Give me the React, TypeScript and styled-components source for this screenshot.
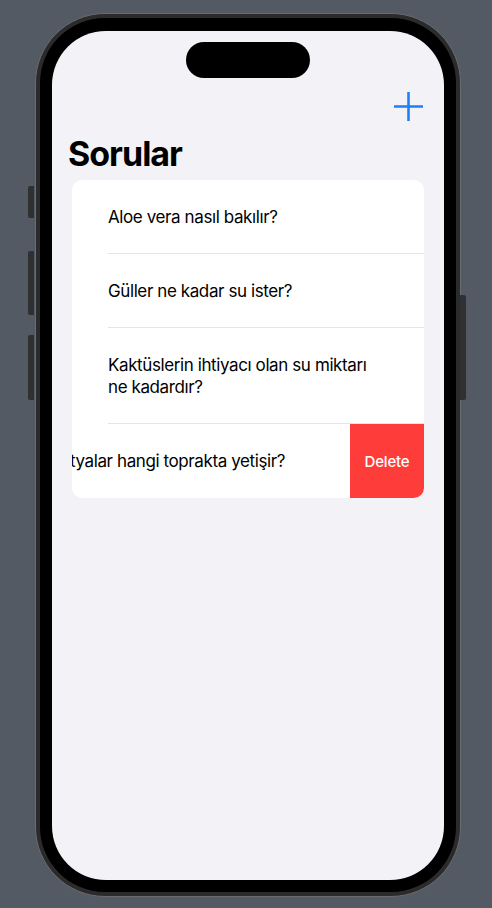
import React from "react";
import styled, { createGlobalStyle } from "styled-components";

const Global = createGlobalStyle`
  html, body { margin: 0; padding: 0; }
  body {
    background: #545a63;
    font-family: Inter, "Noto Sans", "Liberation Sans", sans-serif;
    -webkit-font-smoothing: antialiased;
  }
`;

const Stage = styled.div`
  width: 492px;
  height: 908px;
  padding: 13px 0 0 35px;
  box-sizing: border-box;
  overflow: hidden;
`;

const Frame = styled.div`
  position: relative;
  width: 426px;
  height: 884px;
  box-sizing: border-box;
  border-radius: 70px;
  background: #2b2b2c;
  border: 1px solid #6a6c70;
  padding: 4px;
`;

const SideButton = styled.div<{ $side: "left" | "right"; $top: number; $h: number }>`
  position: absolute;
  top: ${(p) => p.$top}px;
  height: ${(p) => p.$h}px;
  width: 6px;
  ${(p) => (p.$side === "left" ? "left: -8px;" : "right: -6px;")}
  background: #2f3032;
  border-radius: ${(p) => (p.$side === "left" ? "2px 0 0 2px" : "0 2px 2px 0")};
`;

const Bezel = styled.div`
  width: 100%;
  height: 100%;
  box-sizing: border-box;
  border-radius: 65px;
  background: #000;
  padding: 13px 12px 12px;
`;

const Screen = styled.div`
  width: 392px;
  height: 849px;
  border-radius: 54px;
  background: #f2f2f7;
  overflow: hidden;
  display: flex;
  flex-direction: column;
`;

const Island = styled.div`
  width: 124px;
  height: 36px;
  border-radius: 18px;
  background: #000;
  margin: 11px auto 0;
  flex: none;
`;

const NavBar = styled.div`
  display: flex;
  justify-content: flex-end;
  padding: 14px 21px 0 0;
`;

const AddButton = styled.button`
  width: 29px;
  height: 29px;
  padding: 0;
  border: none;
  background: none;
  display: flex;
  cursor: pointer;
`;

const Title = styled.h1`
  margin: 12px 0 0 16px;
  font-size: 34px;
  line-height: 41px;
  font-weight: 700;
  color: #000;
  letter-spacing: -1px;
`;

const Card = styled.div`
  margin: 6px 20px 0;
  background: #fff;
  border-radius: 10px;
  overflow: hidden;
`;

const Row = styled.div<{ $divider: boolean }>`
  position: relative;
  display: flex;
  overflow: hidden;
  &::after {
    content: "";
    display: ${(p) => (p.$divider ? "block" : "none")};
    position: absolute;
    left: 36px;
    right: 0;
    bottom: 0;
    height: 1px;
    background: #e4e4e9;
  }
`;

const RowContent = styled.div<{ $swiped: boolean }>`
  flex: 0 0 100%;
  box-sizing: border-box;
  padding: 26px 44px 26px ${(p) => (p.$swiped ? "39px" : "36px")};
  margin-left: ${(p) => (p.$swiped ? "-74px" : "0")};
  font-size: 17px;
  line-height: 22px;
  letter-spacing: -0.4px;
  color: #000;
  white-space: ${(p) => (p.$swiped ? "nowrap" : "normal")};
`;

const DeleteAction = styled.button`
  flex: 0 0 74px;
  border: none;
  background: #fe3d3a;
  color: #fff;
  font-family: inherit;
  font-size: 15px;
  font-weight: 500;
  letter-spacing: -0.2px;
  padding: 0;
`;

const questions = [
  "Aloe vera nasıl bakılır?",
  "Güller ne kadar su ister?",
  "Kaktüslerin ihtiyacı olan su miktarı ne kadardır?",
  "Kalatyalar hangi toprakta yetişir?",
];

export default function App() {
  const swipedIndex = 3;
  return (
    <>
      <Global />
      <Stage>
        <Frame>
          <SideButton $side="left" $top={172} $h={32} />
          <SideButton $side="left" $top={237} $h={64} />
          <SideButton $side="left" $top={321} $h={65} />
          <SideButton $side="right" $top={281} $h={105} />
          <Bezel>
            <Screen>
              <Island />
              <NavBar>
                <AddButton aria-label="Ekle">
                  <svg width="29" height="29" viewBox="0 0 29 29">
                    <path d="M14.5 0v29M0 14.5h29" stroke="#1e80f8" strokeWidth="2.6" fill="none" />
                  </svg>
                </AddButton>
              </NavBar>
              <Title>Sorular</Title>
              <Card>
                {questions.map((q, i) => (
                  <Row key={q} $divider={i < questions.length - 1}>
                    <RowContent $swiped={i === swipedIndex}>{q}</RowContent>
                    {i === swipedIndex && <DeleteAction>Delete</DeleteAction>}
                  </Row>
                ))}
              </Card>
            </Screen>
          </Bezel>
        </Frame>
      </Stage>
    </>
  );
}
